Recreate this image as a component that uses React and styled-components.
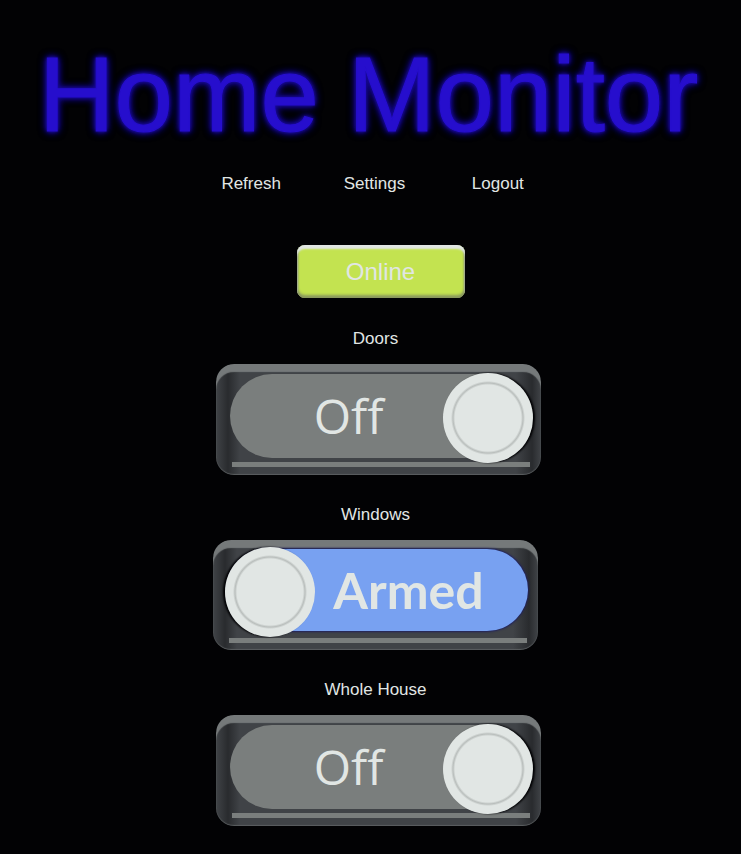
import React, { useState } from "react";
import styled, { createGlobalStyle } from "styled-components";

const GlobalStyle = createGlobalStyle`
  * { box-sizing: border-box; }
  body {
    margin: 0;
    background: #020204;
    color: #e1e6e4;
    font: 17px/20px "Liberation Sans", Arial, sans-serif;
  }
`;

const Page = styled.main`
  display: flex;
  flex-direction: column;
  align-items: center;
  padding: 35px 16px 27px;
  overflow: hidden;
`;

const Title = styled.h1`
  margin: 0 4px 0 0;
  font-size: 105px;
  line-height: 120px;
  font-weight: 400;
  white-space: nowrap;
  color: #260ecd;
  -webkit-text-stroke: 1px #260ecd;
  text-shadow: 0 0 3px #1a0a9c, 0 0 4px #1a0a9c, 0 0 6px #14088a,
    0 0 8px #14088a, 0 0 10px #0e0670;
`;

const Menu = styled.nav`
  display: grid;
  grid-template-columns: repeat(3, 1fr);
  width: 100%;
  max-width: 370px;
  margin: 19px 0 0 8px;
  text-align: center;
`;

const MenuLink = styled.a`
  color: inherit;
  text-decoration: none;
`;

const StatusButton = styled.button`
  width: 168px;
  height: 53px;
  margin: 51px 0 31px 20px;
  padding: 0;
  border: 0;
  border-radius: 8px;
  background: #c3e350;
  box-shadow: inset 0 4px 2px #e1e6e4, inset 0 -3px 3px #8b9a5c,
    inset 0 0 2px 1px #7a7e7d;
  color: #e1e6e4;
  font: 24px/28px "Liberation Sans", Arial, sans-serif;
`;

const Zone = styled.section`
  display: flex;
  flex-direction: column;
  align-items: center;
  margin-bottom: 30px;

  &:last-child { margin-bottom: 0; }
`;

const ZoneLabel = styled.label`
  margin: 0 0 15px 10px;
`;

const Housing = styled.label`
  position: relative;
  display: block;
  width: 325px;
  height: ${({ $on }) => ($on ? "110px" : "111px")};
  margin-left: ${({ $on }) => ($on ? "10px" : "16px")};
  padding: ${({ $on }) => ($on ? "9px 10px 0 14px" : "10px 12px 0 14px")};
  border-radius: 18px;
  background:
    linear-gradient(#7a7e7d, #7a7e7d) 16px 98px / 298px 5px no-repeat,
    linear-gradient(to right, #404347, #292b2e 12px, #404347 24px, #404347 300px, #292b2e 316px, #404347);
  box-shadow: inset 0 8px 1px #75797a, inset 0 -1px 1px #5b5f61;
  cursor: pointer;
`;

const Track = styled.span`
  display: flex;
  align-items: center;
  justify-content: center;
  height: ${({ $on }) => ($on ? "82px" : "84px")};
  padding: ${({ $on }) => ($on ? "0 0 0 62px" : "0 62px 0 0")};
  border-radius: 42px;
  background: ${({ $on }) => ($on ? "#78a1f1" : "#7a7e7d")};
  box-shadow: ${({ $on }) => ($on ? "0 0 2px 1px #20215c" : "none")};
  font: ${({ $on }) =>
    $on
      ? '700 50px/60px Lato, sans-serif'
      : '400 48px/60px "Open Sans", sans-serif'};
  font-variant-ligatures: none;
`;

const Knob = styled.input`
  appearance: none;
  position: absolute;
  top: ${({ $on }) => ($on ? "7px" : "9px")};
  ${({ $on }) => ($on ? "left: 12px;" : "right: 8px;")}
  width: 90px;
  height: 90px;
  margin: 0;
  border-radius: 50%;
  background: radial-gradient(
    circle,
    #e1e6e4 33px,
    #b9bebc 35px,
    #e1e6e4 37px
  );
  box-shadow: ${({ $on }) => ($on ? "-2px" : "2px")} 0 2px #020204;
  cursor: pointer;
`;

function ZoneSwitch({ id, name, initial }) {
  const [on, setOn] = useState(initial);
  return (
    <Zone>
      <ZoneLabel htmlFor={id}>{name}</ZoneLabel>
      <Housing $on={on} htmlFor={id}>
        <Track $on={on}>{on ? "Armed" : "Off"}</Track>
        <Knob
          id={id}
          type="checkbox"
          role="switch"
          $on={on}
          checked={on}
          onChange={(event) => setOn(event.target.checked)}
        />
      </Housing>
    </Zone>
  );
}

export default function App() {
  return (
    <>
      <GlobalStyle />
      <Page>
        <Title>Home Monitor</Title>
        <Menu aria-label="Main">
          <MenuLink href="#refresh">Refresh</MenuLink>
          <MenuLink href="#settings">Settings</MenuLink>
          <MenuLink href="#logout">Logout</MenuLink>
        </Menu>
        <StatusButton type="button">Online</StatusButton>
        <ZoneSwitch id="doors" name="Doors" initial={false} />
        <ZoneSwitch id="windows" name="Windows" initial />
        <ZoneSwitch id="house" name="Whole House" initial={false} />
      </Page>
    </>
  );
}
